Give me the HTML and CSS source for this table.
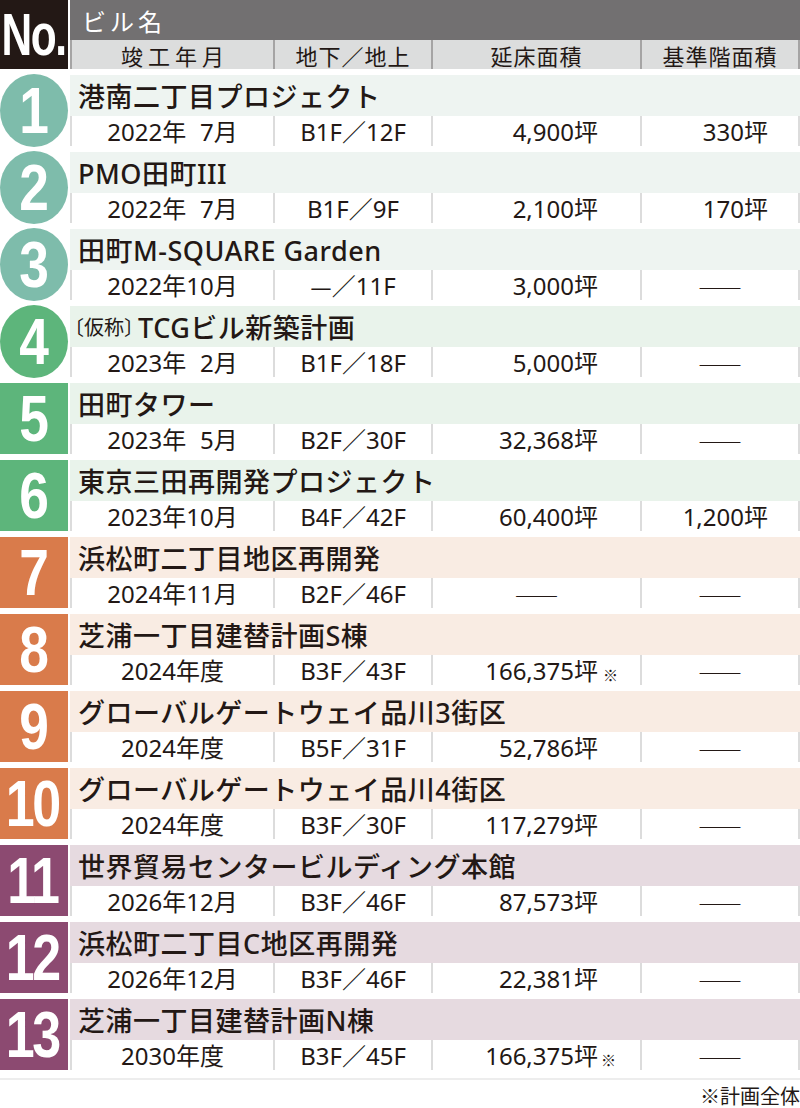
FILE: index.html
```html
<!DOCTYPE html>
<html lang="ja">
<head>
<meta charset="utf-8">
<title>ビル一覧</title>
<link rel="stylesheet" href="styles.css">
</head>
<body>
<div class="sheet">
  <div class="head">
    <div class="no-box"><span>No.</span></div>
    <div class="head-right">
      <div class="head-top">ビル名</div>
      <div class="head-cols">
        <div class="hc wide">竣工年月</div>
        <div class="hc">地下／地上</div>
        <div class="hc">延床面積</div>
        <div class="hc last">基準階面積</div>
      </div>
    </div>
  </div>

  <div class="rows">
    <div class="row g-teal">
      <div class="badge circle"><span class="num">1</span></div>
      <div class="body">
        <div class="name">港南二丁目プロジェクト</div>
        <div class="data"><div class="c date">2022年&#x2007;7月</div><div class="c floor">B1F／12F</div><div class="c area">4,900坪</div><div class="c std">330坪</div></div>
      </div>
    </div>
    <div class="row g-teal">
      <div class="badge circle"><span class="num">2</span></div>
      <div class="body">
        <div class="name">PMO田町III</div>
        <div class="data"><div class="c date">2022年&#x2007;7月</div><div class="c floor">B1F／9F</div><div class="c area">2,100坪</div><div class="c std">170坪</div></div>
      </div>
    </div>
    <div class="row g-teal">
      <div class="badge circle"><span class="num">3</span></div>
      <div class="body">
        <div class="name">田町M-SQUARE Garden</div>
        <div class="data"><div class="c date">2022年10月</div><div class="c floor"><span class="cjk">—</span>／11F</div><div class="c area">3,000坪</div><div class="c std none"><span class="dash">――</span></div></div>
      </div>
    </div>
    <div class="row g-green">
      <div class="badge circle"><span class="num">4</span></div>
      <div class="body">
        <div class="name"><span class="kasho">〔仮称〕</span>TCGビル新築計画</div>
        <div class="data"><div class="c date">2023年&#x2007;2月</div><div class="c floor">B1F／18F</div><div class="c area">5,000坪</div><div class="c std none"><span class="dash">――</span></div></div>
      </div>
    </div>
    <div class="row g-green">
      <div class="badge"><span class="num">5</span></div>
      <div class="body">
        <div class="name">田町タワー</div>
        <div class="data"><div class="c date">2023年&#x2007;5月</div><div class="c floor">B2F／30F</div><div class="c area">32,368坪</div><div class="c std none"><span class="dash">――</span></div></div>
      </div>
    </div>
    <div class="row g-green">
      <div class="badge"><span class="num">6</span></div>
      <div class="body">
        <div class="name">東京三田再開発プロジェクト</div>
        <div class="data"><div class="c date">2023年10月</div><div class="c floor">B4F／42F</div><div class="c area">60,400坪</div><div class="c std">1,200坪</div></div>
      </div>
    </div>
    <div class="row g-orange">
      <div class="badge"><span class="num">7</span></div>
      <div class="body">
        <div class="name">浜松町二丁目地区再開発</div>
        <div class="data"><div class="c date">2024年11月</div><div class="c floor">B2F／46F</div><div class="c area none"><span class="dash">――</span></div><div class="c std none"><span class="dash">――</span></div></div>
      </div>
    </div>
    <div class="row g-orange">
      <div class="badge"><span class="num">8</span></div>
      <div class="body">
        <div class="name">芝浦一丁目建替計画S棟</div>
        <div class="data"><div class="c date">2024年度</div><div class="c floor">B3F／43F</div><div class="c area">166,375坪<span class="note">※</span></div><div class="c std none"><span class="dash">――</span></div></div>
      </div>
    </div>
    <div class="row g-orange">
      <div class="badge"><span class="num">9</span></div>
      <div class="body">
        <div class="name">グローバルゲートウェイ品川3街区</div>
        <div class="data"><div class="c date">2024年度</div><div class="c floor">B5F／31F</div><div class="c area">52,786坪</div><div class="c std none"><span class="dash">――</span></div></div>
      </div>
    </div>
    <div class="row g-orange">
      <div class="badge"><span class="num two">10</span></div>
      <div class="body">
        <div class="name">グローバルゲートウェイ品川4街区</div>
        <div class="data"><div class="c date">2024年度</div><div class="c floor">B3F／30F</div><div class="c area">117,279坪</div><div class="c std none"><span class="dash">――</span></div></div>
      </div>
    </div>
    <div class="row g-purple">
      <div class="badge"><span class="num two">11</span></div>
      <div class="body">
        <div class="name">世界貿易センタービルディング本館</div>
        <div class="data"><div class="c date">2026年12月</div><div class="c floor">B3F／46F</div><div class="c area">87,573坪</div><div class="c std none"><span class="dash">――</span></div></div>
      </div>
    </div>
    <div class="row g-purple">
      <div class="badge"><span class="num two">12</span></div>
      <div class="body">
        <div class="name">浜松町二丁目C地区再開発</div>
        <div class="data"><div class="c date">2026年12月</div><div class="c floor">B3F／46F</div><div class="c area">22,381坪</div><div class="c std none"><span class="dash">――</span></div></div>
      </div>
    </div>
    <div class="row g-purple">
      <div class="badge"><span class="num two">13</span></div>
      <div class="body">
        <div class="name">芝浦一丁目建替計画N棟</div>
        <div class="data"><div class="c date">2030年度</div><div class="c floor">B3F／45F</div><div class="c area">166,375坪<span class="note tight">※</span></div><div class="c std none"><span class="dash">――</span></div></div>
      </div>
    </div>
  </div>

  <div class="foot">※計画全体</div>
</div>
</body>
</html>
```

FILE: styles.css
```css
html, body {
  margin: 0;
  padding: 0;
  background: #ffffff;
}

body {
  font-family: "Noto Sans", "Noto Sans CJK JP", sans-serif;
  color: #231815;
}

.sheet {
  width: 800px;
}

.cjk {
  font-family: "Noto Sans CJK JP", sans-serif;
}

/* ---------- header ---------- */
.head {
  display: flex;
  gap: 2px;
  height: 69px;
}

.no-box {
  width: 68px;
  flex: none;
  background: #231815;
  display: flex;
  align-items: center;
  justify-content: center;
  overflow: hidden;
}

.no-box span {
  display: inline-block;
  font-family: "Liberation Sans", Arial, sans-serif;
  font-weight: 700;
  font-size: 59px;
  line-height: 1;
  color: #ffffff;
  letter-spacing: -2px;
  transform: scaleX(0.72);
  margin-top: 2px;
}

.head-right {
  flex: 1;
  display: flex;
  flex-direction: column;
}

.head-top {
  height: 40px;
  background: #727071;
  color: #ffffff;
  font-family: "Noto Sans CJK JP", sans-serif;
  font-size: 24px;
  letter-spacing: 4px;
  padding-left: 12px;
  display: flex;
  align-items: center;
}

.head-cols {
  height: 29px;
  display: grid;
  grid-template-columns: 203px 158px 209px 160px;
  background: #dcdddd;
}

.hc {
  border-left: 2px solid #a5a4a4;
  display: flex;
  align-items: center;
  justify-content: center;
  font-family: "Noto Sans CJK JP", sans-serif;
  font-size: 22px;
  letter-spacing: 1px;
  line-height: 1;
}

.hc.wide {
  letter-spacing: 5px;
  padding-left: 5px;
}

.hc.last {
  border-right: 2px solid #a5a4a4;
}

/* ---------- rows ---------- */
.rows {
  display: flex;
  flex-direction: column;
  gap: 6px;
  margin-top: 6px;
}

.row {
  display: flex;
  gap: 2px;
  height: 71px;
}

.badge {
  width: 68px;
  flex: none;
  display: flex;
  align-items: center;
  justify-content: center;
  color: #ffffff;
}

.badge.circle {
  height: 73px;
  margin-top: -1px;
  border-radius: 50%;
}

.num {
  display: inline-block;
  font-family: "Liberation Sans", Arial, sans-serif;
  font-weight: 700;
  font-size: 65px;
  line-height: 1;
  transform: scaleX(0.82);
}

.num.two {
  letter-spacing: -3px;
  transform: scaleX(0.8);
  margin-left: -3px;
}

.body {
  flex: 1;
  display: flex;
  flex-direction: column;
}

.name {
  height: 41px;
  display: flex;
  align-items: center;
  padding-left: 8px;
  font-size: 27px;
  font-weight: 500;
  letter-spacing: 0.5px;
  white-space: nowrap;
}

.kasho {
  font-family: "Noto Sans CJK JP", sans-serif;
  font-size: 20px;
  font-weight: 400;
  font-feature-settings: "halt";
  letter-spacing: 0;
  margin-left: -4px;
  margin-right: 4px;
}

.data {
  height: 30px;
  display: grid;
  grid-template-columns: 203px 158px 209px 160px;
  background: #ffffff;
}

.c {
  border-left: 2px solid #dcdcdc;
  display: flex;
  align-items: center;
  font-size: 24px;
  line-height: 1;
  white-space: nowrap;
  padding-top: 2px;
}

.c.date,
.c.floor {
  justify-content: center;
}

.c.area {
  justify-content: flex-end;
  padding-right: 42px;
}

.c.std {
  justify-content: flex-end;
  padding-right: 30px;
  border-right: 2px solid #dcdcdc;
}

.c.none {
  justify-content: center;
  padding-right: 0;
}

.dash {
  font-family: "Noto Sans CJK JP", sans-serif;
  font-size: 22px;
  letter-spacing: 0;
}

.note {
  font-family: "Noto Sans CJK JP", sans-serif;
  font-size: 15px;
  margin-left: 5px;
  margin-right: -20px;
  margin-top: 6px;
}

.note.tight {
  margin-left: 3px;
  margin-right: -18px;
}

/* ---------- colour groups ---------- */
.g-teal .badge { background: #7ebcab; }
.g-teal .name { background: #eef4f1; }

.g-green .badge { background: #5db57b; }
.g-green .name { background: #e9f3eb; }

.g-orange .badge { background: #d97b4b; }
.g-orange .name { background: #f9ece3; }

.g-purple .badge { background: #8c4a71; }
.g-purple .name { background: #e6dae0; }

/* ---------- footer ---------- */
.foot {
  margin-top: 8px;
  border-top: 2px solid #ededed;
  text-align: right;
  font-family: "Noto Sans CJK JP", sans-serif;
  font-size: 20px;
  line-height: 20px;
  padding-top: 6px;
}
```
